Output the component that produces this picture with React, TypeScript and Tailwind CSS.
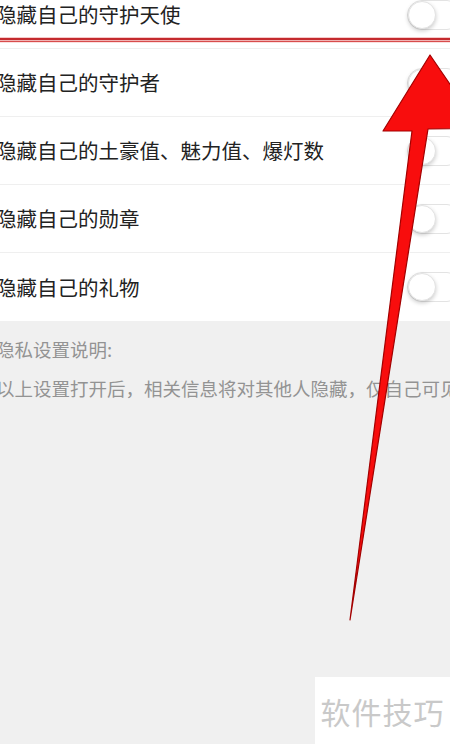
const ROWS = [
  '隐藏自己的守护天使',
  '隐藏自己的守护者',
  '隐藏自己的土豪值、魅力值、爆灯数',
  '隐藏自己的勋章',
  '隐藏自己的礼物',
];

function Toggle() {
  return (
    <div className="mr-[-12px] flex h-[30px] w-[55px] shrink-0 items-center rounded-full border border-[#e3e3e3] bg-white">
      <div className="h-[28px] w-[28px] rounded-full border border-[#e3e3e3] bg-white shadow-[0_2px_4px_rgba(0,0,0,0.2)]" />
    </div>
  );
}

export default function App() {
  return (
    <div
      className="relative h-[744px] w-[450px] overflow-hidden bg-[#f0f0f0]"
      style={{ fontFamily: '"Noto Sans CJK SC", "Noto Sans", sans-serif' }}
    >
      {/* Settings list */}
      <div className="mt-[-19px] bg-white">
        {ROWS.map((label, i) => (
          <div
            key={label}
            className={`flex h-[68px] items-center justify-between ${
              i < ROWS.length - 1 ? 'border-b border-[#efefef]' : ''
            }`}
          >
            <span className="ml-[-4px] text-[20.5px] leading-none text-[#222]">{label}</span>
            <Toggle />
          </div>
        ))}
      </div>

      {/* Explanation */}
      <div className="ml-[-4px] pt-[15px] text-[18.5px] text-[#939393]">
        <p className="leading-[27px]">隐私设置说明:</p>
        <p className="mt-[12px] whitespace-nowrap leading-[27px]">
          以上设置打开后，相关信息将对其他人隐藏，仅自己可见
        </p>
      </div>

      {/* Red underline annotation */}
      <div className="absolute left-0 top-[37px] w-full">
        <div className="h-[1px] bg-[#f6caca]" />
        <div className="h-[2px] bg-[#c42a2e]" />
        <div className="h-[1px] bg-[#f0b4b4]" />
        <div className="h-[1px] bg-[#d84c4c]" />
        <div className="h-[1px] bg-[#fbe0e0]" />
      </div>

      {/* Arrow annotation */}
      <svg className="absolute left-0 top-0" width="450" height="744" viewBox="0 0 450 744">
        <polygon
          points="430,55 480,128 428,129 350,620 412,131 383,131"
          fill="#f80d0d"
          stroke="#a30000"
          strokeWidth="1.2"
          strokeLinejoin="round"
        />
      </svg>

      {/* Watermark */}
      <div className="absolute bottom-0 right-0 flex h-[67px] w-[135px] items-center justify-center bg-white">
        <span className="text-[30px] leading-none tracking-[1px] text-[#c9c9c9]">软件技巧</span>
      </div>
    </div>
  );
}
